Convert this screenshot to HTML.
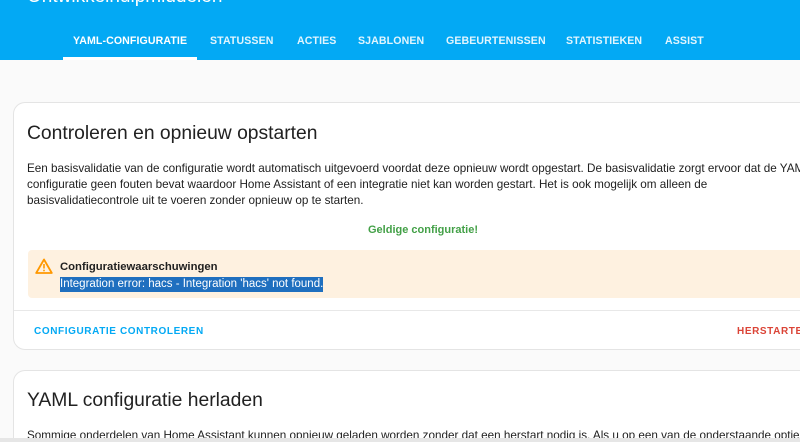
<!DOCTYPE html>
<html><head><style>
body{margin:0;width:800px;height:442px;overflow:hidden;background:#fafafa;font-family:"Liberation Sans",Roboto,sans-serif}
.wrap{position:relative;width:800px;height:442px;overflow:hidden}
.hdr{position:absolute;left:0;top:0;width:800px;height:60px;background:#03a9f4;overflow:hidden}
.ttl{position:absolute;left:27px;top:-14px;color:#fff;font-size:19px}
.tab{position:absolute;top:35px;color:#e1f5fe;font-size:10.6px;font-weight:bold;letter-spacing:.1px}
.ul{position:absolute;left:63px;top:57px;width:134px;height:3px;background:#fff}
.card{position:absolute;left:13px;width:786px;background:#fff;border:1px solid #e4e4e4;border-right:none;border-radius:12px 0 0 12px;overflow:hidden}
.h{position:absolute;left:13px;font-size:19.3px;color:#212121}
.p{position:absolute;left:13px;width:790px;font-size:11.7px;line-height:16px;color:#212121}
.btn{position:absolute;font-size:10px;font-weight:bold;letter-spacing:.6px}
</style></head><body><div class="wrap">
<div class="hdr">
<div class="ttl">Ontwikkelhulpmiddelen</div>
<div class="tab" style="left:73px;color:#fff">YAML-CONFIGURATIE</div>
<div class="tab" style="left:210px">STATUSSEN</div>
<div class="tab" style="left:297px">ACTIES</div>
<div class="tab" style="left:358px">SJABLONEN</div>
<div class="tab" style="left:446px">GEBEURTENISSEN</div>
<div class="tab" style="left:566px">STATISTIEKEN</div>
<div class="tab" style="left:665px">ASSIST</div>
<div class="ul"></div>
</div>
<div class="card" style="top:102px;height:246px">
<div class="h" style="top:20px">Controleren en opnieuw opstarten</div>
<div class="p" style="top:58px">Een basisvalidatie van de configuratie wordt automatisch uitgevoerd voordat deze opnieuw wordt opgestart. De basisvalidatie zorgt ervoor dat de YAML configuratie geen fouten bevat waardoor Home Assistant of een integratie niet kan worden gestart. Het is ook mogelijk om alleen de basisvalidatiecontrole uit te voeren zonder opnieuw op te starten.</div>
<div style="position:absolute;left:354px;top:121px;color:#43a047;font-size:11px;font-weight:bold">Geldige configuratie!</div>
<div style="position:absolute;left:14px;top:147px;width:790px;height:48px;background:#fef1e0;border-radius:4px 0 0 4px">
<svg style="position:absolute;left:7px;top:8px" width="18" height="16" viewBox="0 0 18 16"><path d="M9 1.5L1.2 15h15.6z" fill="none" stroke="#ff9800" stroke-width="1.8" stroke-linejoin="round"/><rect x="8.2" y="6" width="1.6" height="4.5" fill="#ff9800"/><rect x="8.2" y="11.7" width="1.6" height="1.6" fill="#ff9800"/></svg>
<div style="position:absolute;left:32px;top:11px;font-size:11.3px;font-weight:bold;color:#212121">Configuratiewaarschuwingen</div>
<div style="position:absolute;left:32px;top:27px;font-size:11.5px;color:#fff;background:#1f6fbf;line-height:15px">Integration error: hacs - Integration 'hacs' not found.</div>
</div>
<div style="position:absolute;left:0;top:207px;width:790px;height:1px;background:#e8e8e8"></div>
<div class="btn" style="left:20px;top:223px;color:#03a9f4">CONFIGURATIE CONTROLEREN</div>
<div class="btn" style="left:723px;top:223px;color:#db4437">HERSTARTEN</div>
</div>
<div class="card" style="top:370px;height:68px;border-bottom:none;border-radius:12px 0 0 0">
<div class="h" style="top:19px">YAML configuratie herladen</div>
<div class="p" style="top:57px;white-space:nowrap;width:780px;overflow:hidden">Sommige onderdelen van Home Assistant kunnen opnieuw geladen worden zonder dat een herstart nodig is. Als u op een van de onderstaande opties</div>
</div>
<div style="position:absolute;left:0;top:438px;width:800px;height:4px;background:#e6e6e6"></div>
</div></body></html>
